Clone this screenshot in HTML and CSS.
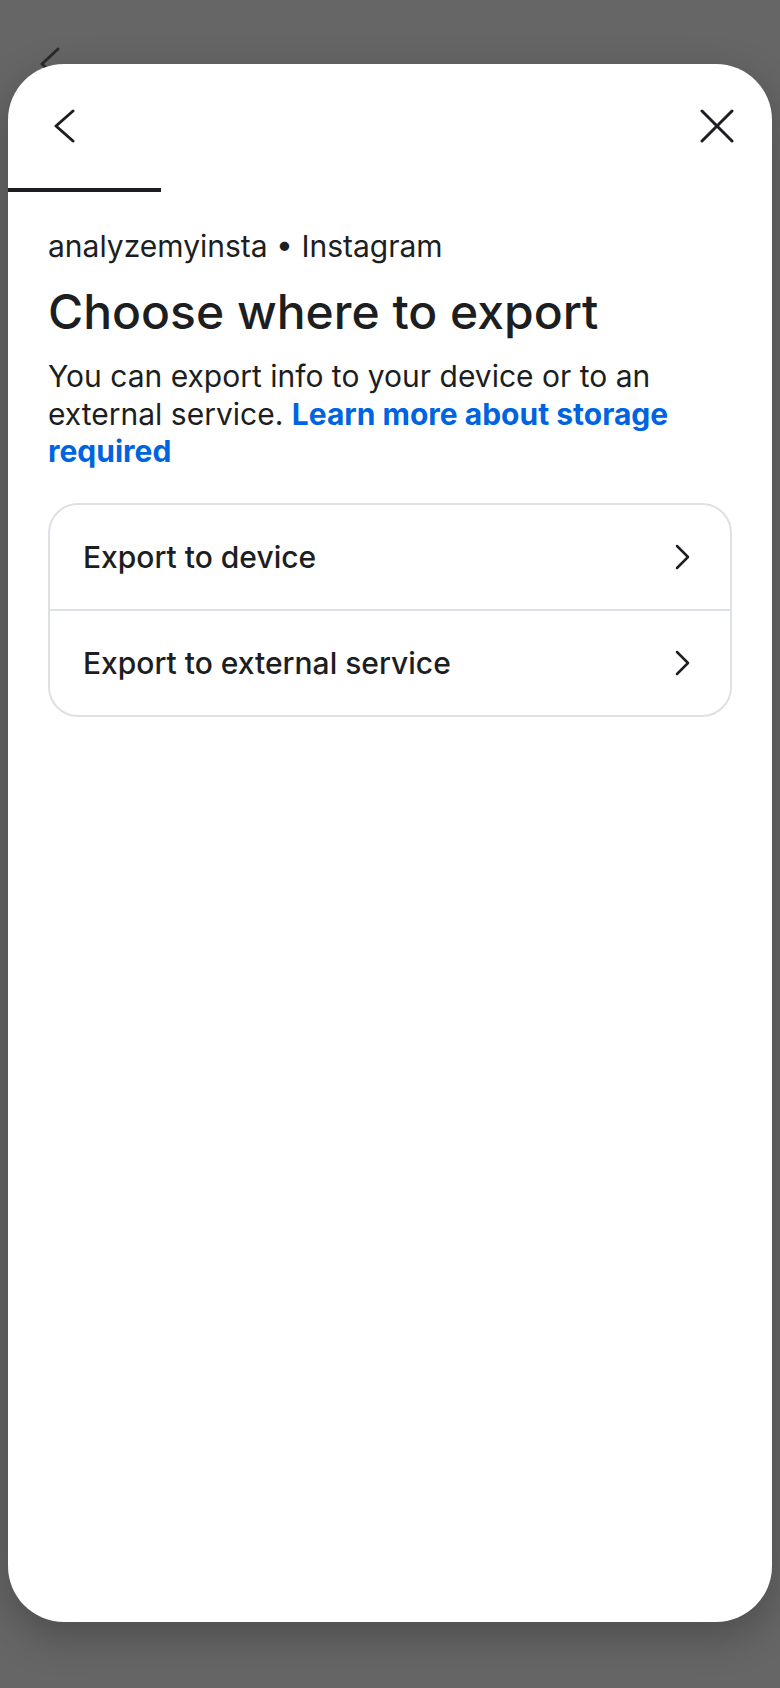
FILE: index.html
```html
<!DOCTYPE html>
<html lang="en">
<head>
    <meta charset="UTF-8">
    <meta name="viewport" content="width=device-width, initial-scale=1.0">
    <title>Choose where to export</title>
    <link rel="stylesheet" href="styles.css">
</head>
<body>
    <div class="behind">
        <svg class="behind-back" width="24" height="34" viewBox="0 0 24 34">
            <polyline points="20,2 4,17 20,32" fill="none" stroke="#2b2b2b" stroke-width="3" stroke-linecap="round" stroke-linejoin="round"/>
        </svg>
    </div>

    <div class="sheet">
        <div class="sheet-header">
            <button class="icon-btn" aria-label="Back">
                <svg width="24" height="34" viewBox="0 0 24 34">
                    <polyline points="21,2 4,17 21,32" fill="none" stroke="#1c1e21" stroke-width="3" stroke-linecap="round" stroke-linejoin="round"/>
                </svg>
            </button>
            <button class="icon-btn" aria-label="Close">
                <svg width="36" height="34" viewBox="0 0 36 34">
                    <line x1="3" y1="2" x2="33" y2="32" stroke="#1c1e21" stroke-width="3" stroke-linecap="round"/>
                    <line x1="33" y1="2" x2="3" y2="32" stroke="#1c1e21" stroke-width="3" stroke-linecap="round"/>
                </svg>
            </button>
        </div>
        <div class="progress"><div class="progress-fill" style="width: 20%"></div></div>

        <div class="content">
            <div class="account">analyzemyinsta • Instagram</div>
            <h1 class="title">Choose where to export</h1>
            <p class="desc">You can export info to your device or to an external service. <a href="#">Learn more about storage required</a></p>

            <div class="options">
                <div class="option">
                    <span>Export to device</span>
                    <svg width="15" height="26" viewBox="0 0 15 26">
                        <polyline points="2,2 13,13 2,24" fill="none" stroke="#1c1e21" stroke-width="2.5" stroke-linecap="round" stroke-linejoin="round"/>
                    </svg>
                </div>
                <div class="option">
                    <span>Export to external service</span>
                    <svg width="15" height="26" viewBox="0 0 15 26">
                        <polyline points="2,2 13,13 2,24" fill="none" stroke="#1c1e21" stroke-width="2.5" stroke-linecap="round" stroke-linejoin="round"/>
                    </svg>
                </div>
            </div>
        </div>
    </div>
</body>
</html>
```

FILE: styles.css
```css
html, body {
    margin: 0;
    padding: 0;
}

body {
    background-color: #666666;
    font-family: Inter, Roboto, "Liberation Sans", sans-serif;
    color: #1c1e21;
    height: 1688px;
    box-sizing: border-box;
}

.behind {
    height: 64px;
    padding: 47px 0 0 38px;
    box-sizing: border-box;
}

.behind-back {
    display: block;
}

.sheet {
    position: relative;
    margin: 0 8px;
    height: 1558px;
    background: white;
    border-radius: 56px;
    overflow: hidden;
    box-shadow: 0 14px 40px rgba(0, 0, 0, 0.25);
}

.sheet-header {
    height: 124px;
    display: flex;
    justify-content: space-between;
    align-items: center;
    padding: 0 37px 0 44px;
    box-sizing: border-box;
}

.icon-btn {
    background: none;
    border: none;
    padding: 0;
    display: flex;
    cursor: pointer;
}

.progress {
    height: 4px;
}

.progress-fill {
    height: 100%;
    background: #1c1e21;
}

.content {
    padding: 0 40px;
}

.account {
    margin-top: 36px;
    font-size: 30px;
    line-height: 36px;
}

.title {
    margin: 20px 0 0;
    font-size: 48px;
    font-weight: 500;
    line-height: 56px;
}

.desc {
    margin: 18px 0 0;
    font-size: 30px;
    line-height: 37.5px;
}

.desc a {
    color: #0064e0;
    font-weight: 700;
    text-decoration: none;
}

.options {
    margin-top: 32px;
    border: 2px solid #dde0e4;
    border-radius: 30px;
}

.option {
    height: 104px;
    display: flex;
    align-items: center;
    justify-content: space-between;
    padding: 0 40px 0 33px;
    font-size: 30px;
    font-weight: 500;
}

.option + .option {
    border-top: 2px solid #dde0e4;
}
```
